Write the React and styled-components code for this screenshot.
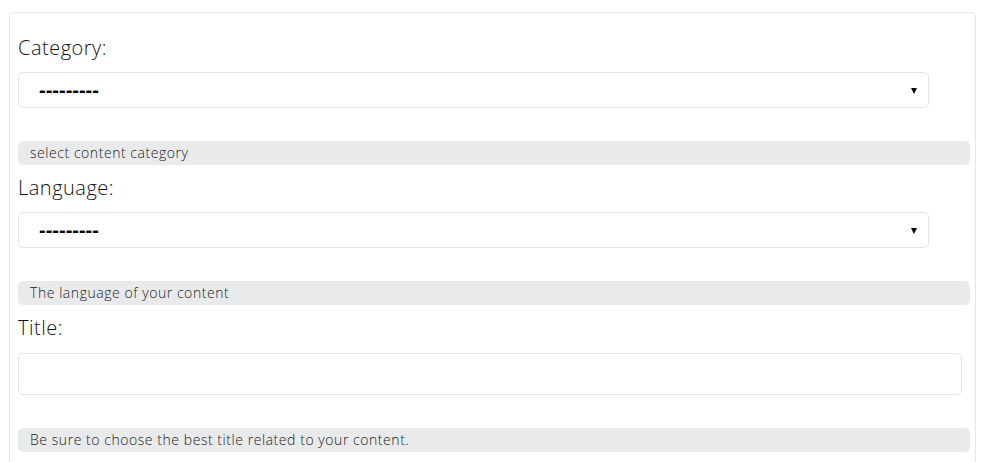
import React from "react";
import styled, { createGlobalStyle } from "styled-components";

const Global = createGlobalStyle`
  html, body { margin: 0; padding: 0; background: #fff; }
  body { font-family: "Open Sans", "Lato", sans-serif; color: #111; overflow: hidden; }
  * { box-sizing: border-box; }
`;

const Card = styled.div`
  margin: 12px 17px 0 9px;
  border: 1px solid #e6e6e6;
  border-radius: 5px;
  padding: 20px 5px 20px 8px;
  min-height: 480px;
`;

const Group = styled.div`
  display: flex;
  flex-direction: column;
  align-items: flex-start;
  margin-top: ${(p) => (p.$first ? 0 : 8)}px;
`;

const Label = styled.label`
  font-size: 20px;
  line-height: 30px;
  font-weight: 300;
  letter-spacing: 0.5px;
  color: #111;
  margin-bottom: ${(p) => p.$gap || 9}px;
`;

const SelectWrap = styled.div`
  position: relative;
  width: calc(100% - 41px);
  &::after {
    content: "";
    position: absolute;
    right: 12px;
    top: 16px;
    border-left: 3.5px solid transparent;
    border-right: 3.5px solid transparent;
    border-top: 6px solid #000;
    pointer-events: none;
  }
`;

const Select = styled.select`
  appearance: none;
  -webkit-appearance: none;
  width: 100%;
  height: 36px;
  border: 1px solid #e4e4e4;
  border-radius: 5px;
  background: #fff;
  padding: 0 0 0 20px;
  font-family: "Liberation Sans", Arial, sans-serif;
  font-weight: 700;
  font-size: 20px;
  color: #000;
  outline: none;
`;

const Input = styled.input`
  width: calc(100% - 8px);
  height: 42px;
  border: 1px solid #e4e4e4;
  border-radius: 5px;
  background: #fff;
  outline: none;
`;

const Help = styled.div`
  width: 100%;
  height: 24px;
  margin-top: ${(p) => p.$gap || 33}px;
  background: #e9eaeb;
  border-radius: 5px;
  padding: 0 12px;
  font-size: 14px;
  font-weight: 300;
  letter-spacing: 0.55px;
  line-height: 23px;
  color: #222;
`;

function SelectField({ label, help, first }) {
  return (
    <Group $first={first}>
      <Label>{label}</Label>
      <SelectWrap>
        <Select defaultValue="">
          <option value="">---------</option>
        </Select>
      </SelectWrap>
      <Help>{help}</Help>
    </Group>
  );
}

export default function App() {
  return (
    <>
      <Global />
      <Card>
        <SelectField first label="Category:" help="select content category" />
        <SelectField label="Language:" help="The language of your content" />
        <Group>
          <Label $gap={10}>Title:</Label>
          <Input type="text" />
          <Help $gap={33}>Be sure to choose the best title related to your content.</Help>
        </Group>
      </Card>
    </>
  );
}
